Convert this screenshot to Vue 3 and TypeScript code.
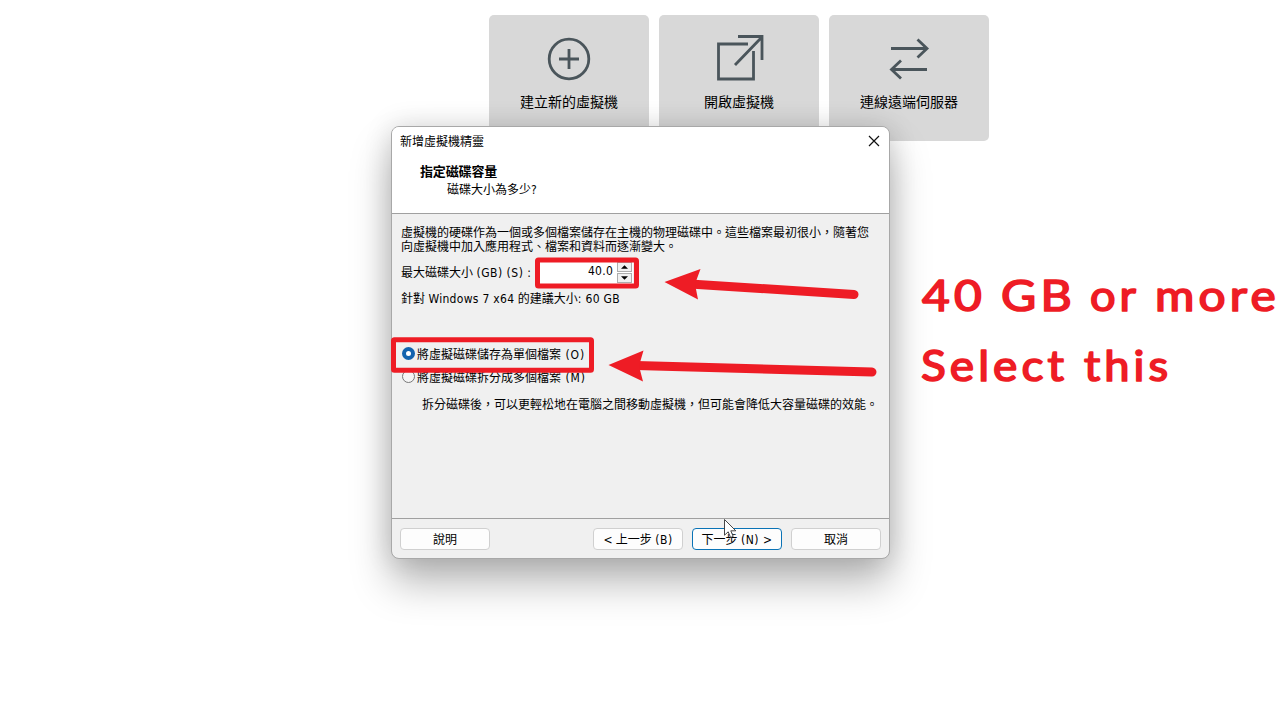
<script setup lang="ts">
interface Card {
  label: string
  icon: 'create' | 'open' | 'connect'
}

const cards: Card[] = [
  { label: '建立新的虛擬機', icon: 'create' },
  { label: '開啟虛擬機', icon: 'open' },
  { label: '連線遠端伺服器', icon: 'connect' },
]
</script>

<template>
  <main class="screen">
    <div class="cards">
      <button v-for="card in cards" :key="card.icon" class="card" type="button">
        <svg v-if="card.icon === 'create'" class="card-icon" viewBox="0 0 50 50">
          <circle cx="25" cy="25" r="19.8" />
          <path d="M15 25H35M25 15V35" />
        </svg>
        <svg v-else-if="card.icon === 'open'" class="card-icon" viewBox="0 0 50 50">
          <path d="M39.500 17V45H4.500V10H34M21 31L47 4M24 2.500H48V26" />
        </svg>
        <svg v-else class="card-icon" viewBox="0 0 50 50">
          <path d="M7 14.500H43M33.500 5.500L43 14.500L33.500 23.500M43 35.500H7.500M17 26.500L7.500 35.500L17 44.500" />
        </svg>
        <span class="card-label">{{ card.label }}</span>
      </button>
    </div>

    <section class="dialog">
      <header class="head">
        <div class="titlebar">
          <span class="title">新增虛擬機精靈</span>
          <svg class="close" viewBox="0 0 12 12"><path d="M1 1L11 11M11 1L1 11" /></svg>
        </div>
        <h1>指定磁碟容量</h1>
        <p class="subtitle">磁碟大小為多少<span class="la">?</span></p>
      </header>

      <div class="body">
        <p class="intro">虛擬機的硬碟作為一個或多個檔案儲存在主機的物理磁碟中。這些檔案最初很小，隨著您<br />向虛擬機中加入應用程式、檔案和資料而逐漸變大。</p>
        <div class="size-row">
          <label>最大磁碟大小 <span class="la">(GB) (S) :</span></label>
          <div class="spin">
            <span class="value">40.0</span>
            <div class="steps">
              <span class="step"><svg viewBox="0 0 6 3"><path d="M0 3L3 0L6 3Z" /></svg></span>
              <span class="step"><svg viewBox="0 0 6 3"><path d="M0 0L3 3L6 0Z" /></svg></span>
            </div>
          </div>
        </div>
        <p class="hint">針對 <span class="win">Windows 7 x64</span> 的建議大小<span class="win">: 60 GB</span></p>
        <div class="radio first"><i class="dot on"></i><span>將虛擬磁碟儲存為單個檔案 <span class="la key">(O)</span></span></div>
        <div class="radio"><i class="dot"></i><span>將虛擬磁碟拆分成多個檔案 <span class="la key">(M)</span></span></div>
        <p class="note">拆分磁碟後，可以更輕松地在電腦之間移動虛擬機，但可能會降低大容量磁碟的效能。</p>
      </div>

      <footer class="foot">
        <button type="button" class="btn help">說明</button>
        <button type="button" class="btn">&lt; 上一步 <span class="la">(B)</span></button>
        <button type="button" class="btn primary">下一步 <span class="la">(N) &gt;</span></button>
        <button type="button" class="btn">取消</button>
      </footer>
    </section>

    <svg class="overlay" viewBox="0 0 1280 720">
      <g class="frames">
        <rect x="537.500" y="260" width="99" height="26" rx="1" />
        <rect x="393.500" y="339.800" width="198" height="30.500" rx="1" />
      </g>
      <g class="arrows">
        <path class="shaft" d="M690 284L854 294.500" />
        <path d="M664.500 282L700.500 269L695 284L698 299.500Z" />
        <path class="shaft" d="M636 365.500L872 372" />
        <path d="M608.500 365L643.500 350.500L639 366L643 381.500Z" />
      </g>
      <g class="callout">
        <text x="922" y="311" textLength="64" lengthAdjust="spacingAndGlyphs">40</text>
        <text x="1001" y="311" textLength="75" lengthAdjust="spacingAndGlyphs">GB</text>
        <text x="1090" y="311" textLength="50" lengthAdjust="spacingAndGlyphs">or</text>
        <text x="1155" y="311" textLength="125" lengthAdjust="spacingAndGlyphs">more</text>
        <text x="921" y="381" textLength="147" lengthAdjust="spacingAndGlyphs">Select</text>
        <text x="1084" y="381" textLength="88" lengthAdjust="spacingAndGlyphs">this</text>
      </g>
      <path class="cursor" d="M724.500 519.500V535.200L728.200 531.800L730.600 537.500L733.200 536.400L730.800 530.800H735.800Z" />
    </svg>
  </main>
</template>

<style>
body {
  margin: 0;
  background: #fff;
}
</style>

<style scoped>
.screen {
  position: relative;
  width: 1280px;
  height: 720px;
  overflow: hidden;
  background: #fff;
  color: #000;
  font-family: "DejaVu Sans Condensed", "Noto Sans CJK TC", sans-serif;
  font-size: 12px;
}

.cards {
  display: flex;
  gap: 10px;
  padding: 15px 0 0 489px;
}

.card {
  display: flex;
  flex-direction: column;
  align-items: center;
  width: 160px;
  height: 126px;
  padding: 19px 0 0;
  border: 0;
  border-radius: 5px;
  background: #d8d8d8;
  color: #000;
}

.card-icon {
  width: 50px;
  height: 50px;
  fill: none;
  stroke: #4a555b;
  stroke-width: 2.8;
}

.card-label {
  margin-top: 7px;
  font: 14px/20px "Noto Sans CJK TC", sans-serif;
}

.dialog {
  position: absolute;
  left: 391px;
  top: 126px;
  display: flex;
  flex-direction: column;
  box-sizing: border-box;
  width: 499px;
  height: 433px;
  border: 1px solid #a8a8a8;
  border-radius: 8px;
  background: #f0f0f0;
  background-clip: padding-box;
  box-shadow: 0 24px 40px rgba(0, 0, 0, 0.28), 0 0 28px rgba(0, 0, 0, 0.14);
}

p,
h1 {
  margin: 0;
  font-size: 12px;
}

.la {
  letter-spacing: 0.5px;
}

.key {
  margin-left: 1px;
  letter-spacing: 0.9px;
}

.win {
  letter-spacing: 0.3px;
}

.head {
  height: 86px;
  border-bottom: 1px solid #a0a0a0;
  border-radius: 7px 7px 0 0;
  background: #fff;
}

.titlebar {
  display: flex;
  align-items: center;
  justify-content: space-between;
  height: 28px;
  padding: 0 9px 0 8px;
}

.title {
  padding-top: 1px;
  line-height: 16px;
}

.close {
  width: 12px;
  height: 12px;
  stroke: #111;
  stroke-width: 1.2;
}

h1 {
  padding: 8px 0 0 28px;
  font-size: 13px;
  line-height: 18px;
  letter-spacing: -0.15px;
}

.subtitle {
  padding-left: 55px;
  line-height: 18px;
}

.body {
  flex: 1;
  padding: 12px 0 0 9px;
  white-space: nowrap;
}

.intro {
  line-height: 14px;
}

.size-row {
  display: flex;
  height: 24px;
  margin-top: 7px;
}

.size-row label {
  width: 138px;
  line-height: 25px;
}

.spin {
  display: flex;
  justify-content: flex-end;
  width: 94px;
  height: 24px;
  background: #fff;
}

.value {
  margin-right: 4px;
  line-height: 21px;
  letter-spacing: 0.25px;
}

.steps {
  display: flex;
  flex-direction: column;
  gap: 1px;
  padding: 1px 1px 0 0;
}

.step {
  display: flex;
  align-items: center;
  justify-content: center;
  box-sizing: border-box;
  width: 15px;
  height: 10px;
  border: 1px solid #adadad;
  background: #f0f0f0;
}

.step svg {
  width: 7px;
  height: 4px;
}

.hint {
  margin-top: 5px;
  line-height: 18px;
}

.radio {
  display: flex;
  align-items: center;
  gap: 2px;
  height: 18px;
  margin: 5px 0 0 1px;
}

.radio.first {
  margin-top: 36px;
}

.dot {
  box-sizing: border-box;
  width: 13px;
  height: 13px;
  border: 1px solid #777;
  border-radius: 50%;
  background: #f5f5f5;
}

.dot.on {
  margin-top: 1px;
  border: 4px solid #1263ae;
  background: #fff;
}

.note {
  padding: 11px 0 0 21px;
  line-height: 18px;
}

.foot {
  display: flex;
  gap: 9px;
  height: 40px;
  padding: 9px 8px 0;
  box-sizing: border-box;
  border-top: 1px solid #a0a0a0;
}

.btn {
  box-sizing: border-box;
  width: 90px;
  height: 22px;
  padding: 0;
  border: 1px solid #d0d0d0;
  border-radius: 4px;
  background: #fdfdfd;
  color: #000;
  font: inherit;
  line-height: 22px;
  white-space: nowrap;
}

.help {
  margin-right: auto;
}

.primary {
  border-color: #0a73b6;
}

.overlay {
  position: absolute;
  inset: 0;
  width: 1280px;
  height: 720px;
}

.frames {
  fill: none;
  stroke: #ee1c25;
  stroke-width: 5;
}

.arrows {
  fill: #ee1c25;
}

.shaft {
  stroke: #ee1c25;
  stroke-width: 9;
  stroke-linecap: round;
}

.callout {
  fill: #ee1c25;
  stroke: #ee1c25;
  stroke-width: 1.7;
  stroke-linejoin: round;
  letter-spacing: 3.8px;
  font: 400 43px Lato, sans-serif;
}

.cursor {
  fill: #fff;
  stroke: #333;
  stroke-width: 0.9;
}
</style>
